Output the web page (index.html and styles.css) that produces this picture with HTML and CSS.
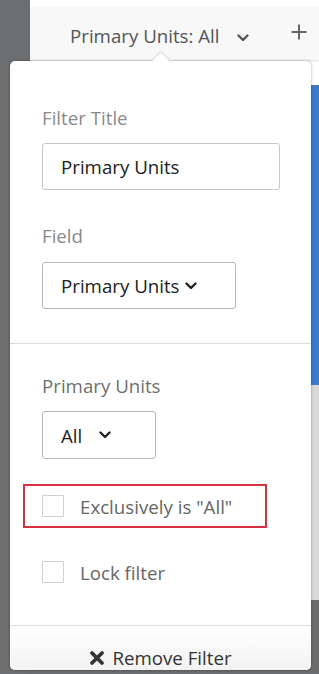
FILE: index.html
```html
<!DOCTYPE html>
<html>
<head>
<meta charset="utf-8">
<link rel="stylesheet" href="styles.css">
</head>
<body>
<div class="app">
  <div class="sidebar"></div>
  <div class="main">
    <div class="topstrip"></div>
    <div class="toolbar">
      <div class="filter-pill">
        <span>Primary Units: All</span>
        <svg class="chev chev-top" viewBox="0 0 12 8" width="12" height="8"><polyline points="1.5,1.5 6,6 10.5,1.5" fill="none" stroke="#555" stroke-width="2.4" stroke-linecap="round" stroke-linejoin="round"/></svg>
      </div>
      <svg class="plus" viewBox="0 0 16 16" width="16" height="16"><path d="M8 0.5v15M0.5 8h15" stroke="#666" stroke-width="2"/></svg>
    </div>
    <div class="content">
      <div class="blue-card"></div>
      <div class="gray-card"></div>
    </div>
  </div>

  <div class="popover">
    <div class="arrow"></div>
    <div class="section">
      <label class="lbl">Filter Title</label>
      <div class="input">Primary Units</div>
      <label class="lbl lbl-field">Field</label>
      <div class="select select-field">Primary Units<svg class="chev" viewBox="0 0 12 8" width="12" height="8"><polyline points="1.5,1.5 6,6 10.5,1.5" fill="none" stroke="#222" stroke-width="2.4" stroke-linecap="round" stroke-linejoin="round"/></svg></div>
    </div>
    <div class="section section-2">
      <label class="lbl lbl-dark">Primary Units</label>
      <div class="select select-all">All<svg class="chev" viewBox="0 0 12 8" width="12" height="8"><polyline points="1.5,1.5 6,6 10.5,1.5" fill="none" stroke="#222" stroke-width="2.4" stroke-linecap="round" stroke-linejoin="round"/></svg></div>
      <div class="check highlight"><span class="box"></span><span>Exclusively is "All"</span></div>
      <div class="check lock"><span class="box"></span><span>Lock filter</span></div>
    </div>
    <div class="footer">
      <svg class="x" viewBox="0 0 16 16" width="16" height="16"><path d="M3 3l10 10M13 3L3 13" stroke="#333" stroke-width="3.8" stroke-linecap="round"/></svg>
      <span>Remove Filter</span>
    </div>
  </div>
</div>
</body>
</html>
```
FILE: styles.css
```css
* { box-sizing: border-box; }
html, body { margin: 0; padding: 0; }
body {
  width: 319px;
  height: 674px;
  overflow: hidden;
  font-family: "Open Sans", "Noto Sans", sans-serif;
}
.app {
  position: relative;
  display: flex;
  width: 319px;
  height: 674px;
}
.sidebar {
  width: 30px;
  background: #6d6e70;
}
.main {
  flex: 1;
  display: flex;
  flex-direction: column;
  background: #fff;
}
.topstrip { height: 7px; background: #fff; }
.toolbar {
  height: 53px;
  background: #f8f8f8;
  box-shadow: 0 1px 2px rgba(0,0,0,0.12);
  display: flex;
  align-items: flex-start;
  padding-top: 17px;
  padding-left: 40px;
  padding-right: 12px;
  position: relative;
  z-index: 1;
}
.filter-pill {
  display: flex;
  align-items: flex-start;
  gap: 17px;
  font-size: 18.7px;
  line-height: 24px;
  color: #555;
}
.chev-top { margin-top: 10px; }
.plus { margin-left: auto; margin-top: 0; }
.content {
  flex: 1;
  display: flex;
  flex-direction: column;
  align-items: flex-end;
  padding-top: 25px;
  background: #fff;
}
.blue-card { width: 8px; height: 300px; background: #3b7bc6; }
.gray-card { width: 8px; height: 215px; background: #d9d9d9; }
.content::after {
  content: "";
  flex: 1;
  width: 100%;
  background: #6b6c6e;
}

.popover {
  position: absolute;
  left: 10px;
  top: 61px;
  width: 301px;
  height: 609px;
  background: #fff;
  border-radius: 5px;
  box-shadow: 0 0 3px rgba(0,0,0,0.35);
  z-index: 2;
  display: flex;
  flex-direction: column;
}
.arrow {
  position: absolute;
  left: 145px;
  top: -6px;
  width: 12px;
  height: 12px;
  background: #fff;
  transform: rotate(45deg);
  box-shadow: -1px -1px 2px rgba(0,0,0,0.12);
}
.section {
  display: flex;
  flex-direction: column;
  align-items: flex-start;
  padding: 45px 32px 34px 32px;
  border-bottom: 1px solid #dcdcdc;
}
.lbl {
  font-size: 18.7px;
  color: #8a8a8a;
  line-height: 24px;
}
.lbl-dark { color: #6f6f6f; }
.input {
  margin-top: 13px;
  width: 238px;
  height: 47px;
  border: 1px solid #c8c8c8;
  border-radius: 3px;
  padding-left: 18px;
  display: flex;
  align-items: center;
  font-size: 18.7px;
  color: #222;
}
.lbl-field { margin-top: 34px; }
.select {
  margin-top: 14px;
  height: 47px;
  border: 1px solid #b8b8b8;
  border-radius: 3px;
  display: flex;
  align-items: center;
  font-size: 18.7px;
  color: #222;
}
.select-field { width: 194px; padding-left: 18px; gap: 5px; }
.select-all { width: 114px; height: 48px; margin-top: 13px; padding-left: 18px; gap: 17px; }
.section-2 {
  padding-top: 30px;
  padding-bottom: 0;
  border-bottom: none;
  flex: 1;
}
.check {
  display: flex;
  align-items: center;
  gap: 16px;
  font-size: 18.7px;
  color: #666;
}
.box {
  flex: none;
  width: 22px;
  height: 22px;
  border: 1px solid #cfcfcf;
  border-radius: 1px;
  background: #fff;
}
.highlight {
  margin-top: 25px;
  margin-left: -19px;
  width: 244px;
  height: 44px;
  border: 2px solid #d7323f;
  padding-left: 17px;
}
.lock { margin-top: 33px; height: 22px; }
.footer {
  height: 45px;
  border-top: 1px solid #dcdcdc;
  background: linear-gradient(#ffffff, #f2f2f2);
  border-radius: 0 0 5px 5px;
  display: flex;
  align-items: flex-end;
  justify-content: center;
  gap: 7px;
  padding-bottom: 0;
  font-size: 18.7px;
  color: #333;
  line-height: 24px;
}
.x { margin-bottom: 4px; }
```
